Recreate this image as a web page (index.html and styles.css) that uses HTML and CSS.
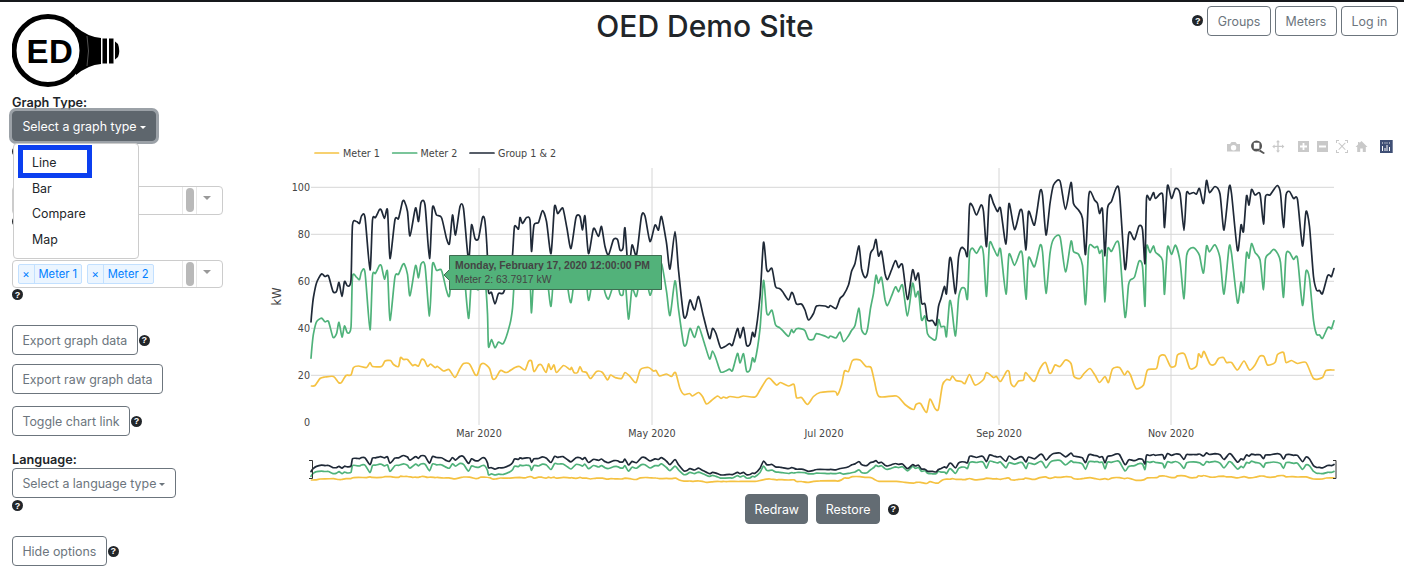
FILE: index.html
```html
<!DOCTYPE html>
<html lang="en">
<head>
    <meta charset="UTF-8">
    <meta name="viewport" content="width=device-width, initial-scale=1.0">
    <title>OED Demo Site</title>
    <link rel="stylesheet" href="styles.css">
</head>
<body>
    <header class="top-bar">
        <svg class="logo" viewBox="12 14 110 74" width="110" height="74">
            <path d="M76 27 Q88 37 101 38 L101 64 Q88 65 76 75 Z" fill="#000"/>
            <path d="M87 36 Q90 51 87 66" fill="none" stroke="#666" stroke-width="0.8"/>
            <rect x="102.5" y="38.5" width="4.5" height="25" fill="#000"/>
            <rect x="109" y="38.5" width="4.5" height="25" fill="#000"/>
            <path d="M115 41.5 L118 44 Q120.5 51 118 57 L115 59.5 Z" fill="#000"/>
            <circle cx="48" cy="50.5" r="34" fill="#fff" stroke="#000" stroke-width="5"/>
            <text class="logo-text" x="50" y="63" text-anchor="middle">ED</text>
        </svg>
        <h1 class="title">OED Demo Site</h1>
        <nav class="nav">
            <span class="help">?</span>
            <button class="btn nav-btn">Groups</button>
            <button class="btn nav-btn">Meters</button>
            <button class="btn nav-btn">Log in</button>
        </nav>
    </header>

    <div class="content">
        <aside class="sidebar">
            <div class="field">
                <label class="field-label">Graph Type:</label>
                <div class="dropdown">
                    <button class="btn btn-active caret">Select a graph type</button>
                    <div class="dropdown-menu">
                        <div class="dropdown-item">Line</div>
                        <div class="dropdown-item">Bar</div>
                        <div class="dropdown-item">Compare</div>
                        <div class="dropdown-item">Map</div>
                        <div class="highlight"></div>
                    </div>
                </div>
                <span class="help help-below">?</span>
            </div>
            <div class="field">
                <div class="field-label" aria-label="Groups"></div>
                <div class="select-box">
                    <div class="select-value"></div>
                    <div class="select-scroll"><span class="select-thumb"></span></div>
                    <div class="select-arrow"></div>
                </div>
                <span class="help help-below">?</span>
            </div>
            <div class="field">
                <div class="field-label" aria-label="Meters"></div>
                <div class="select-box">
                    <div class="select-value">
                        <span class="tag"><span class="tag-x">×</span><span class="tag-name">Meter 1</span></span>
                        <span class="tag"><span class="tag-x">×</span><span class="tag-name">Meter 2</span></span>
                    </div>
                    <div class="select-scroll"><span class="select-thumb"></span></div>
                    <div class="select-arrow"></div>
                </div>
                <span class="help help-below">?</span>
            </div>

            <div class="btn-row row-export">
                <button class="btn">Export graph data</button>
                <span class="help">?</span>
            </div>
            <div class="btn-row row-raw">
                <button class="btn">Export raw graph data</button>
            </div>
            <div class="btn-row row-link">
                <button class="btn">Toggle chart link</button>
                <span class="help">?</span>
            </div>
            <div class="field field-language">
                <label class="field-label">Language:</label>
                <button class="btn caret">Select a language type</button>
                <span class="help help-below">?</span>
            </div>
            <div class="btn-row row-hide">
                <button class="btn">Hide options</button>
                <span class="help">?</span>
            </div>
        </aside>

        <main class="chart-area">
            <svg class="chart" viewBox="270 130 1134 360" width="1134" height="360">
                <g class="modebar">
                    <!-- camera -->
                    <path d="M1227 144 H1230 L1231.5 142 H1235.5 L1237 144 H1240 V151.5 H1227 Z M1233.5 145 A2.7 2.7 0 1 0 1233.6 150.4 A2.7 2.7 0 1 0 1233.5 145 Z" fill-rule="evenodd"/>
                    <!-- zoom, the active tool -->
                    <path class="modebar-on" d="M1256.5 140.5 A5.500 5.500 0 1 0 1256.6 151.500 A5.500 5.500 0 1 0 1256.5 140.5 Z M1253.800 142.800 H1259.400 V148.800 H1253.800 Z M1260 149.500 L1265 153 L1263.500 154 L1258.500 151 Z" fill-rule="evenodd"/>
                    <!-- pan -->
                    <path d="M1278 140 L1280 142.3 H1278.7 V145.7 H1282 V144.4 L1284.4 146.4 L1282 148.4 V147 H1278.7 V150.4 H1280 L1278 152.8 L1276 150.4 H1277.3 V147 H1274.6 V148.4 L1272.2 146.4 L1274.6 144.4 V145.7 H1277.3 V142.3 H1276 Z"/>
                    <!-- zoom in / zoom out -->
                    <path d="M1298 141 H1309 V152 H1298 Z M1302.6 143 V145.6 H1300 V147.4 H1302.6 V150 H1304.4 V147.4 H1307 V145.6 H1304.4 V143 Z" fill-rule="evenodd"/>
                    <path d="M1317 141 H1328 V152 H1317 Z M1319 145.6 V147.4 H1326 V145.6 Z" fill-rule="evenodd"/>
                    <!-- autoscale -->
                    <path d="M1336 140 H1339 V141 H1337 V143 H1336 Z M1345 140 H1348 V143 H1347 V141 H1345 Z M1336 150 H1337 V152 H1339 V153 H1336 Z M1347 150 H1348 V153 H1345 V152 H1347 Z M1339 142.5 L1342 145.5 L1345 142.5 L1345.7 143.2 L1342.7 146.2 L1345.7 149.4 L1345 150.1 L1342 147 L1339 150.1 L1338.3 149.4 L1341.3 146.2 L1338.3 143.2 Z"/>
                    <!-- home -->
                    <path d="M1361.5 141 L1367.5 147 H1365.8 V152 H1362.8 V148.5 H1360.2 V152 H1357.2 V147 H1355.5 L1358 144.5 V142 H1359.5 V143 Z"/>
                    <!-- plotly -->
                    <rect class="modebar-logo" x="1380" y="140" width="12.7" height="13"/>
                    <path class="modebar-logo-marks" d="M1382 146 h1 v5 h-1 Z M1384.5 148 h1 v3 h-1 Z M1386.5 145 h1 v6 h-1 Z M1389 147 h1 v4 h-1 Z M1382 142.5 h1 v1 h-1 Z M1384.5 142.5 h1 v1 h-1 Z M1386.5 142.5 h1 v1 h-1 Z M1389 142.5 h1 v1 h-1 Z"/>
                </g>

                <g class="legend">
                    <line class="line-meter1" x1="315" y1="153" x2="338.500" y2="153"/>
                    <text x="343" y="156.500">Meter 1</text>
                    <line class="line-meter2" x1="392.700" y1="153" x2="416.700" y2="153"/>
                    <text x="420.500" y="156.500">Meter 2</text>
                    <line class="line-group" x1="470" y1="153" x2="494" y2="153"/>
                    <text x="498" y="156.500">Group 1 &amp; 2</text>
                </g>

                <g class="grid">
                    <line x1="311" y1="187.300" x2="1334" y2="187.300"/>
                    <line x1="311" y1="234.300" x2="1334" y2="234.300"/>
                    <line x1="311" y1="281.300" x2="1334" y2="281.300"/>
                    <line x1="311" y1="328.300" x2="1334" y2="328.300"/>
                    <line x1="311" y1="375.300" x2="1334" y2="375.300"/>
                    <line x1="479" y1="168" x2="479" y2="425"/>
                    <line x1="652" y1="168" x2="652" y2="425"/>
                    <line x1="999" y1="168" x2="999" y2="425"/>
                    <line x1="1171" y1="168" x2="1171" y2="425"/>
                </g>

                <g class="axis axis-y">
                    <text x="310" y="191">100</text>
                    <text x="310" y="238">80</text>
                    <text x="310" y="285">60</text>
                    <text x="310" y="332">40</text>
                    <text x="310" y="379">20</text>
                    <text x="310" y="425.500">0</text>
                </g>
                <text class="axis axis-title" transform="translate(281 296.500) rotate(-90)" text-anchor="middle">kW</text>
                <g class="axis axis-x">
                    <text x="479" y="436.500">Mar 2020</text>
                    <text x="652" y="436.500">May 2020</text>
                    <text x="824" y="436.500">Jul 2020</text>
                    <text x="999" y="436.500">Sep 2020</text>
                    <text x="1171" y="436.500">Nov 2020</text>
                </g>

                <path id="meter1" class="line-meter1"/>
                <path id="meter2" class="line-meter2"/>
                <path id="group" class="line-group"/>

                <path id="slider1" class="line-meter1"/>
                <path id="slider2" class="line-meter2"/>
                <path id="slider3" class="line-group"/>
                <path class="slider-grip" d="M309 460.500 H312.500 V478.500 H309"/>
                <path class="slider-grip" d="M1333 460.500 H1336 V478.500 H1333"/>

                <g class="tip">
                    <path class="tip-box" d="M449.500 255.500 H661.500 V289.500 H449.500 V280.500 L444 275 L449.500 269.500 Z"/>
                    <text class="tip-date" x="455" y="268.500">Monday, February 17, 2020 12:00:00 PM</text>
                    <text class="tip-value" x="455" y="283">Meter 2: 63.7917 kW</text>
                </g>
            </svg>
            <div class="chart-actions">
                <button class="btn btn-solid">Redraw</button>
                <button class="btn btn-solid">Restore</button>
                <span class="help">?</span>
            </div>
        </main>
    </div>

    <script src="chart.js"></script>
</body>
</html>
```

FILE: styles.css
```css
* {
    box-sizing: border-box;
}
body {
    font-family: Inter, "Noto Sans", sans-serif;
    font-size: 12.4px;
    margin: 0;
    height: 572px;
    overflow: hidden;
    background-color: #fff;
    border-top: 2px solid #17191c;
    color: #212529;
}
.top-bar {
    display: grid;
    grid-template-columns: 1fr auto 1fr;
    align-items: start;
    height: 86px;
    padding: 0 6px 0 12px;
}
.logo {
    display: block;
    margin-top: 12px;
}
.logo-text {
    font-family: "Liberation Sans", sans-serif;
    font-size: 33px;
    font-weight: 700;
    letter-spacing: 0.5px;
    fill: #000;
}
.title {
    font-size: 30px;
    font-weight: 500;
    line-height: 48px;
    margin: 0;
}
.nav {
    display: flex;
    justify-content: flex-end;
    align-items: flex-start;
    gap: 4px;
    padding-top: 4px;
}
.nav .help {
    margin: 9px 0 0;
}
.nav .nav-btn {
    padding: 0 9.6px;
}
.content {
    display: flex;
}
.sidebar {
    width: 270px;
    padding-left: 12px;
    flex: none;
}
.field {
    margin-top: 17px;
}
.field:first-child {
    margin-top: 7px;
}
.field-label {
    display: block;
    font-size: 12.7px;
    font-weight: 600;
    height: 14px;
    line-height: 16px;
    margin-bottom: 2px;
}
.btn {
    display: inline-block;
    height: 30px;
    padding: 0 9.4px;
    font-family: inherit;
    font-size: 12.4px;
    color: #6c757d;
    background: #fff;
    border: 1px solid #6c757d;
    border-radius: 4px;
    white-space: nowrap;
}
.btn-active {
    color: #fff;
    background: #5e666d;
    border-color: #5e666d;
    box-shadow: 0 0 0 3px rgba(130, 138, 145, 0.8);
}
.btn-solid {
    color: #fff;
    background: #636c73;
    border-color: #636c73;
    padding: 0 8.4px;
}
.caret::after {
    content: "";
    display: inline-block;
    margin-left: 3px;
    vertical-align: 2px;
    border-top: 3px solid;
    border-left: 3px solid transparent;
    border-right: 3px solid transparent;
}
.help {
    display: inline-flex;
    justify-content: center;
    align-items: center;
    flex: none;
    width: 11px;
    height: 11px;
    font-family: "Liberation Sans", sans-serif;
    font-size: 9px;
    font-weight: 700;
    color: #fff;
    background: #212529;
    border-radius: 50%;
}
.help-below {
    display: flex;
    margin-top: 1px;
}
.dropdown + .help-below {
    margin-top: 5px;
    margin-bottom: -4px;
}
.dropdown {
    position: relative;
}
.dropdown-menu {
    position: absolute;
    top: 32px;
    left: 1px;
    width: 126px;
    height: 116px;
    padding-top: 6px;
    background: #fff;
    border: 1px solid #ccc;
    border-radius: 4px;
    z-index: 5;
}
.dropdown-item {
    height: 25.7px;
    line-height: 25.7px;
    padding-left: 18px;
    color: #212529;
}
.highlight {
    position: absolute;
    top: 1px;
    left: 4px;
    width: 74px;
    height: 33px;
    border: 5px solid #0b3ff0;
}
.select-box {
    display: flex;
    width: 211px;
    height: 28.5px;
    background: #fff;
    border: 1px solid #ccc;
    border-radius: 4px;
}
.select-value {
    flex: 1;
    display: flex;
    align-items: center;
    gap: 4.6px;
    padding-left: 4.5px;
}
.tag {
    display: flex;
    height: 20px;
    line-height: 18px;
    font-size: 11.2px;
    color: #007eff;
    background: #ebf5ff;
    border: 1px solid #c2e0ff;
    border-radius: 2px;
}
.tag-x {
    width: 16px;
    text-align: center;
    border-right: 1px solid #c2e0ff;
}
.tag-name {
    padding: 0 4px;
}
.select-scroll {
    width: 15px;
    display: flex;
    justify-content: center;
    align-items: center;
    border-left: 1px solid #e8e8e8;
    border-right: 1px solid #e8e8e8;
}
.select-thumb {
    width: 8px;
    height: 24px;
    background: #b9b9b9;
    border-radius: 4px;
}
.select-arrow {
    width: 25px;
    position: relative;
}
.select-arrow::after {
    content: "";
    position: absolute;
    top: 9px;
    left: 6px;
    border-top: 4px solid #999;
    border-left: 4px solid transparent;
    border-right: 4px solid transparent;
}
.btn-row {
    display: flex;
    align-items: center;
    gap: 1px;
}
.row-export {
    margin-top: 25px;
}
.row-raw {
    margin-top: 9px;
}
.row-link {
    margin-top: 12px;
}
.field-language {
    margin-top: 16px;
}
.field-language .help-below {
    margin-top: 2px;
}
.row-hide {
    margin-top: 25px;
}
.chart-area {
    flex: 1;
    margin-top: 42px;
}
.chart {
    display: block;
}
.chart-actions {
    display: flex;
    justify-content: center;
    align-items: center;
    gap: 8px;
    margin-top: 4px;
    padding-right: 30px;
}
.modebar path {
    fill: #c9c9c9;
}
.modebar .modebar-on {
    fill: #555;
}
.modebar .modebar-logo-marks {
    fill: #fff;
}
.modebar-logo {
    fill: #3f4f75;
}
.legend text,
.axis {
    font-family: "DejaVu Sans", sans-serif;
    font-size: 9.6px;
    fill: #444;
}
.axis-title {
    font-size: 11.5px;
}
.axis-y text {
    text-anchor: end;
}
.axis-x text {
    text-anchor: middle;
}
.grid line {
    stroke: #d6d6d6;
    stroke-width: 1;
}
.line-meter1,
.line-meter2,
.line-group {
    fill: none;
    stroke-width: 1.7;
    stroke-linejoin: round;
    stroke-linecap: round;
}
.line-meter1 {
    stroke: #f5c242;
}
.line-meter2 {
    stroke: #4fb27a;
}
.line-group {
    stroke: #1f2937;
}
.slider-grip {
    fill: none;
    stroke: #333;
    stroke-width: 1;
}
.tip-box {
    fill: #52b27a;
    stroke: #3f6d52;
    stroke-width: 1;
}
.tip-date,
.tip-value {
    font-family: "Liberation Sans", sans-serif;
    font-size: 10.4px;
    fill: #444;
}
.tip-date {
    font-weight: 700;
}
```

FILE: chart.js
```js
// traced readings, as [x, y] in chart pixels (same coordinates as the svg viewBox)
const groupLine = [
    [311,322],[312,310],[313.5,297],[316.5,283],[321.5,274],[325,276.5],[328.5,276],[333,291.5],[336.5,291.5],[339,282.5],
    [342,296.5],[344.5,281.5],[347.5,286],[351,280],[352.5,225],[356.5,221.5],[359.5,223.5],[361.5,216],[365,217.5],[370,270],
    [372.5,220],[375.5,217.5],[379.5,209.5],[381.5,210.5],[384.5,218.5],[387.5,210],[390,258.5],[395,219.5],[398.5,218.5],[402.5,201.5],
    [404.5,201.5],[407.5,211.5],[410,236],[415.5,208],[418.5,221.5],[421,202.5],[425,205],[429.5,258.5],[432.5,207.5],[436.5,215],
    [441.5,217.5],[446.5,238.5],[449.5,243.5],[452.5,215],[455.5,235],[460,206.5],[463.5,208.5],[468.5,260],[471.5,225],[475,238.5],
    [478.5,238.5],[482.5,217.5],[485,221.5],[487.5,258],[488.5,292],[491.5,292.5],[495,304],[498.5,293.5],[503.5,292.5],[510,272],
    [512.5,255],[514.5,226.5],[518.5,229],[520,217.5],[522.5,223.5],[526.5,217.5],[530,220],[531.5,251.5],[534,225],[538.5,222.5],
    [542.5,210.5],[546.5,221.5],[551,253.5],[554.5,206.5],[557.5,213.5],[559.5,211.5],[563,208.5],[567,228.5],[571,248.5],[576,217.5],
    [580,216.5],[582.5,230],[585,216],[588.5,253.5],[593.5,228.5],[598.5,236.5],[601.5,226.5],[605,246.5],[608.5,255],[613.5,239.5],
    [617.5,239.5],[620,250],[623,248],[625,228],[628.5,272],[632,245],[636.5,255],[641.5,216],[645,216],[650,241.5],
    [655,225],[658.5,230],[661.5,216.5],[666.5,243],[670,269],[675,231.5],[678.5,270],[683.5,315],[686.5,315.5],[690,300],
    [694.5,310],[698.5,296.5],[703.5,316.5],[709.5,338.5],[712.5,328.5],[716,333.5],[720.5,347.5],[725,346.5],[729.5,343.5],[732.5,345],
    [737.5,328.5],[740,338],[743.5,327.5],[746.5,345],[750,344],[752.5,332.5],[755,335.5],[760,296.5],[763.5,242.5],[766.5,268.5],
    [768.5,271.5],[772,268.5],[775.5,286.5],[779.5,288.5],[782.5,291.5],[788.5,300],[791.5,292.5],[793.5,295],[796.5,304],[801.5,304],
    [805,310],[808.5,320],[813.5,313.5],[816.5,306],[825,306],[828.5,307.5],[830.5,305.5],[836,308.5],[840,298.5],[843.5,295],
    [848.5,285],[851.5,271.5],[855,263.5],[859,246],[861.5,268.5],[865,277.5],[867.5,273.5],[870.5,253.5],[873.5,248.5],[876,239.5],
    [878.5,256],[881.5,251.5],[885,273.5],[887.5,279.5],[891.5,270],[895.5,260.5],[898.5,267.5],[902.5,265],[907.5,299.5],[912.5,270],
    [915.5,280],[918.5,273.5],[921.5,302.5],[925,304],[927.5,320],[932.5,320.5],[936,325],[938.5,306.5],[941,298.5],[944.5,286.5],
    [946.5,293.5],[949.5,259.5],[951.5,261.5],[955.5,293.5],[958.5,257.5],[961.5,247.5],[965,250],[967.5,255],[969.5,206.5],[972.5,206],
    [976.5,215],[981,205],[983.5,211.5],[986.5,246.5],[989.5,196],[993.5,203.5],[997.5,211.5],[1000.5,208.5],[1006,244],[1009,203.5],
    [1014.5,229.5],[1020,210.5],[1022.5,213.5],[1026,250],[1028.5,211.5],[1034.5,225],[1040,191.5],[1042.5,195],[1046,235],[1050,203.5],
    [1053.5,185],[1060,181],[1065.5,209.5],[1071,182.5],[1073.5,203.5],[1078.5,210],[1082.5,218.5],[1085.5,254.5],[1088.5,198.5],[1090.5,191.5],
    [1094.5,200],[1097.5,203.5],[1099.5,213.5],[1102.5,209.5],[1105,256],[1107.5,208.5],[1111.5,201.5],[1116.5,187.5],[1119.5,193.5],[1125,269],
    [1128.5,235],[1130.5,232.5],[1134.5,239.5],[1139,226],[1142.5,229.5],[1145,263.5],[1146.5,198.5],[1150,200],[1153.5,192.5],[1155.5,198.5],
    [1162.5,194],[1164.5,227.5],[1167.5,185.5],[1171.5,198.5],[1175.5,188.5],[1180,193.5],[1184,230.5],[1186.5,193.5],[1189.5,194],[1193.5,192.5],
    [1196.5,194],[1199.5,188.5],[1203.5,203.5],[1206.5,180.5],[1209.5,192.5],[1215,186.5],[1220,194],[1224,230],[1229,187.5],[1231.5,193.5],
    [1237.5,250.5],[1241,225],[1243.5,231.5],[1246.5,196],[1249,205],[1251.5,189.5],[1255,195],[1260,194],[1263.5,224],[1265.5,196.5],
    [1270,195],[1273.5,190],[1277.5,185.5],[1280.5,193.5],[1283.5,227.5],[1286,195],[1289.5,191.5],[1293.5,198.5],[1297.5,199.5],[1302.5,246],
    [1306,211.5],[1309.5,226.5],[1313.5,276.5],[1316.5,290],[1319.5,290.5],[1322.5,293.5],[1327.5,276],[1330,275.5],[1331.5,276.5],[1334,268.5]
];

const meter1Line = [
    [311.5,386],[315,385.5],[320,378.5],[325,377],[333.5,376.5],[338.5,382.5],[341.5,382.5],[346,375.5],[351,375],[353.5,367.5],
    [358.5,366],[366.5,367.5],[370,362.5],[372.5,366.5],[381.5,366.5],[385,361],[390.5,360.5],[393.5,364.5],[398.5,366.5],[400.5,357.5],
    [403.5,359.5],[407.5,359.5],[412.5,365.5],[415,364.5],[418.5,366],[421.5,359.5],[424.5,360.5],[427.5,366.5],[430.5,364],[435,367.5],
    [437.5,366.5],[443.5,371],[449,369.5],[455,377.5],[460,368.5],[463.5,363.5],[469.5,364],[475,374.5],[477.5,374.5],[480.5,365],
    [484,363.5],[489.5,368.5],[492.5,378.5],[495.5,378.5],[500.5,370.5],[506.5,372.5],[515,367.5],[519.5,366.5],[525,370],[528.5,361.5],
    [531.5,361],[534,371.5],[538.5,365],[541.5,365],[546,372.5],[548.5,364],[551,369.5],[554,365],[556.5,372.5],[563.5,365.5],
    [570,369.5],[571.5,367.5],[574,372.5],[577.5,372.5],[580,366.5],[582.5,371.5],[586.5,372.5],[590.5,378.5],[596.5,371.5],[602.5,372.5],
    [607.5,380],[610.5,375],[615,377.5],[621.5,378.5],[625,372.5],[630,376.5],[636,382.5],[640.5,369.5],[648.5,367.5],[653.5,371],
    [656,370.5],[659.5,376],[666.5,374],[671.5,376.5],[675.5,372.5],[680,388.5],[684,394.5],[689.5,393.5],[692.5,396],[698.5,392.5],
    [702.5,396.5],[706.5,404],[711.5,400.5],[717.5,396],[721,398.5],[723.5,397],[726.5,398],[730,396.5],[738.5,397.5],[743.5,396],
    [755,397],[760,390],[766.5,379.5],[770,378.5],[776.5,385],[780.5,382.5],[788.5,386],[794,384.5],[796.5,397.5],[801.5,397.5],
    [807.5,404.5],[813.5,396.5],[820,392.5],[835,391.5],[837.5,395],[841.5,385],[844.5,371],[848.5,371.5],[852.5,360.5],[860,360],
    [866,366.5],[871,367.5],[874.5,381.5],[879,396.5],[896.5,396],[905,404.5],[913.5,409.5],[916,404.5],[920.5,403.5],[926.5,412.5],
    [930,399],[935,408.5],[938.5,409],[942.5,385],[946.5,379.5],[950,380],[952.5,376],[956,380.5],[961.5,381.5],[965,383.5],
    [969.5,374.5],[975,385],[983.5,379.5],[986.5,372.5],[993.5,377.5],[996.5,376.5],[1000.5,381.5],[1006.5,371.5],[1009,371.5],[1011,383.5],
    [1014.5,386.5],[1018.5,381],[1023.5,380],[1025.5,372.5],[1032.5,380.5],[1035,380.5],[1040,368.5],[1045.5,362.5],[1049,372.5],[1051.5,372.5],
    [1055,365],[1060,366.5],[1065.5,360],[1071,363.5],[1074,376.5],[1080,378.5],[1084,373.5],[1090,368.5],[1095.5,376],[1099.5,382.5],
    [1105,376.5],[1108.5,382.5],[1112.5,369],[1119.5,367.5],[1124.5,375],[1127.5,371],[1130.5,375],[1136,388.5],[1143.5,385],[1147.5,370],
    [1156.5,368.5],[1159.5,356.5],[1165,355.5],[1170.5,366.5],[1175.5,365.5],[1177.5,355],[1184.5,354],[1190,368.5],[1196.5,366],[1198.5,354],
    [1201.5,357.5],[1204,351.5],[1210,364],[1215,364],[1218.5,358.5],[1223.5,357.5],[1226.5,362.5],[1231.5,362.5],[1237.5,370],[1244,361],
    [1249.5,370],[1255,365],[1259.5,356.5],[1264,356.5],[1267.5,365],[1275,362.5],[1277.5,354.5],[1283.5,352.5],[1286,362.5],[1291.5,360.5],
    [1297.5,363.5],[1306,362.5],[1313.5,378.5],[1322.5,377.5],[1326,370.5],[1334,370]
];

const ZERO_Y = 422.3;

function yAt(line, x) {
    for (let i = 1; i < line.length; i++) {
        if (x <= line[i][0]) {
            const a = line[i - 1];
            const b = line[i];
            return a[1] + (b[1] - a[1]) * (x - a[0]) / (b[0] - a[0]);
        }
    }
    return line[line.length - 1][1];
}

// the group is the sum of its two meters, so meter 2 is what is left after meter 1
const meter2Line = groupLine.map(function(p) {
    return [p[0], p[1] + ZERO_Y - yAt(meter1Line, p[0])];
});

function toSpline(points) {
    let d = `M${points[0][0]} ${points[0][1].toFixed(1)}`;
    for (let i = 0; i < points.length - 1; i++) {
        const p0 = points[Math.max(i - 1, 0)];
        const p1 = points[i];
        const p2 = points[i + 1];
        const p3 = points[Math.min(i + 2, points.length - 1)];
        const c1x = p1[0] + (p2[0] - p0[0]) / 8;
        const c1y = p1[1] + (p2[1] - p0[1]) / 8;
        const c2x = p2[0] - (p3[0] - p1[0]) / 8;
        const c2y = p2[1] - (p3[1] - p1[1]) / 8;
        d += ` C${c1x.toFixed(1)} ${c1y.toFixed(1)} ${c2x.toFixed(1)} ${c2y.toFixed(1)} ${p2[0]} ${p2[1].toFixed(1)}`;
    }
    return d;
}

function toSlider(points) {
    return points.map(function(p) {
        return [p[0], 480 + (p[1] - 386) * 0.1317];
    });
}

document.getElementById('group').setAttribute('d', toSpline(groupLine));
document.getElementById('meter1').setAttribute('d', toSpline(meter1Line));
document.getElementById('meter2').setAttribute('d', toSpline(meter2Line));
document.getElementById('slider3').setAttribute('d', toSpline(toSlider(groupLine)));
document.getElementById('slider1').setAttribute('d', toSpline(toSlider(meter1Line)));
document.getElementById('slider2').setAttribute('d', toSpline(toSlider(meter2Line)));
```
